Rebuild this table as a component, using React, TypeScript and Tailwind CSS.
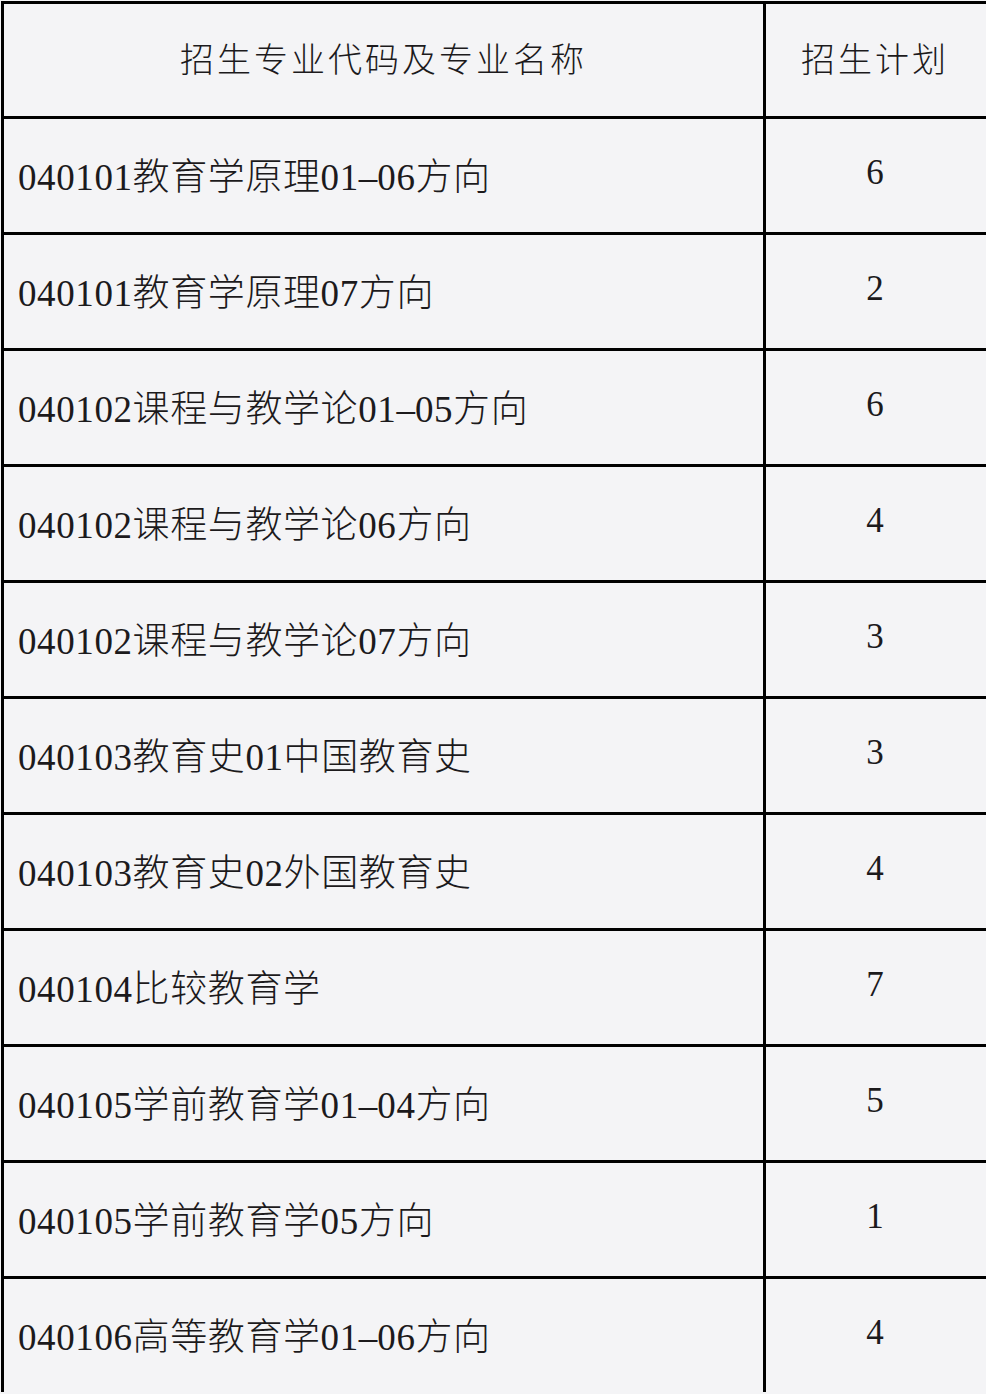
const rows: { name: string; plan: string }[] = [
  { name: "040101教育学原理01-06方向", plan: "6" },
  { name: "040101教育学原理07方向", plan: "2" },
  { name: "040102课程与教学论01-05方向", plan: "6" },
  { name: "040102课程与教学论06方向", plan: "4" },
  { name: "040102课程与教学论07方向", plan: "3" },
  { name: "040103教育史01中国教育史", plan: "3" },
  { name: "040103教育史02外国教育史", plan: "4" },
  { name: "040104比较教育学", plan: "7" },
  { name: "040105学前教育学01-04方向", plan: "5" },
  { name: "040105学前教育学05方向", plan: "1" },
  { name: "040106高等教育学01-06方向", plan: "4" },
];

const font = "font-['Liberation_Serif','Noto_Sans_CJK_SC',serif]";

// the source font sets the dash half-width, like the digits
function Name({ text }: { text: string }) {
  const parts = text.split("-");
  return (
    <>
      {parts.map((p, i) => (
        <span key={i}>
          {i > 0 && <span className="inline-block w-[0.5em] text-center">–</span>}
          {p}
        </span>
      ))}
    </>
  );
}

export default function App() {
  return (
    <div className="w-[986px] h-[1394px] overflow-hidden bg-[#f4f4f6] pt-[1px] pl-[1px]">
      <div className={`border-l-[3px] border-t-[3px] border-black text-[#1c1a1c] font-light ${font}`}>
        {/* header */}
        <div className="grid grid-cols-[762px_1fr] border-b-[3px] border-black">
          <div className="h-[112px] border-r-[3px] border-black flex items-center justify-center text-[34px] tracking-[3px]">
            招生专业代码及专业名称
          </div>
          <div className="h-[112px] flex items-center justify-center text-[34px] tracking-[3px] pr-[2px]">
            招生计划
          </div>
        </div>

        {rows.map((r, i) => (
          <div
            key={i}
            className={`grid grid-cols-[762px_1fr] ${i < rows.length - 1 ? "border-b-[3px] border-black" : ""}`}
          >
            <div className="h-[113px] border-r-[3px] border-black flex items-center pl-[14px] pt-[4px] text-[37px] tracking-[0.6px] leading-none whitespace-nowrap">
              <Name text={r.name} />
            </div>
            <div className="h-[113px] flex items-center justify-center pb-[6px] text-[35px] leading-none pr-[2px]">
              {r.plan}
            </div>
          </div>
        ))}
      </div>
    </div>
  );
}
